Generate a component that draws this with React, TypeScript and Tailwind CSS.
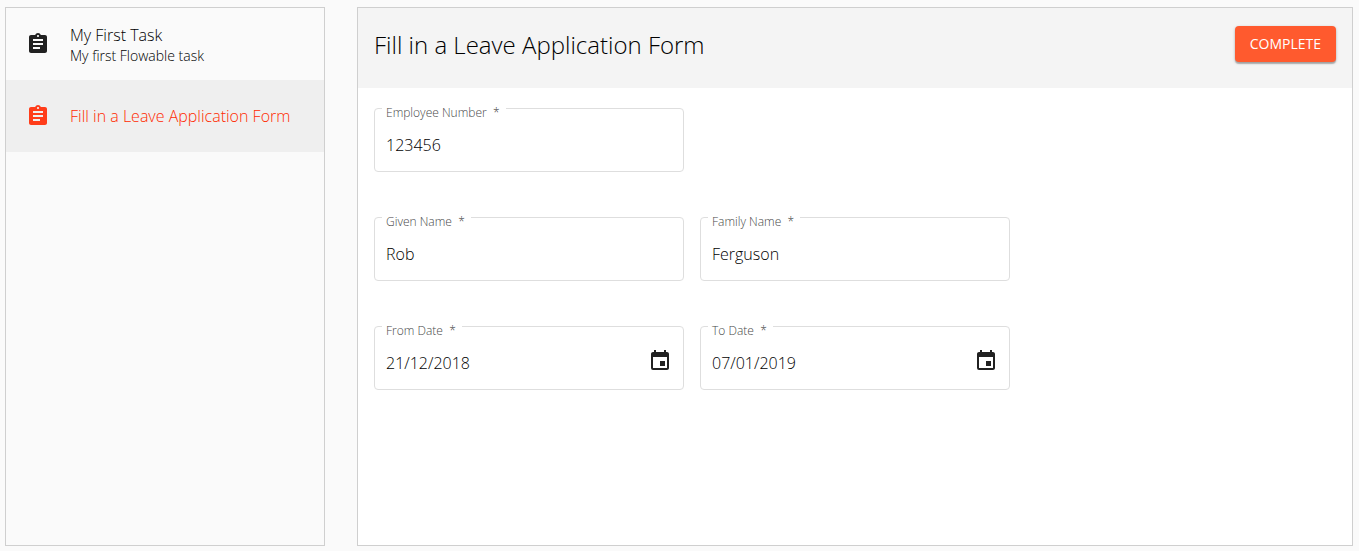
import { useState } from "react";
import { MdAssignment, MdEvent } from "react-icons/md";

type Task = { id: string; title: string; description?: string };

const tasks: Task[] = [
  { id: "first", title: "My First Task", description: "My first Flowable task" },
  { id: "leave", title: "Fill in a Leave Application Form" },
];

type FieldProps = {
  id: string;
  label: string;
  initial: string;
  date?: boolean;
  className?: string;
};

function Field({ id, label, initial, date = false, className = "" }: FieldProps) {
  const [value, setValue] = useState(initial);
  return (
    <div
      className={`relative flex h-16 items-center rounded border border-[#dedede] px-[11px] ${className}`}
    >
      <label
        htmlFor={id}
        className="absolute -top-1 left-[7px] bg-white pl-1 pr-1.5 text-xs leading-4 whitespace-pre text-[#484848]"
      >
        {label}
        {"  *"}
      </label>
      <input
        id={id}
        type="text"
        required
        value={value}
        onChange={(e) => setValue(e.target.value)}
        className="mt-2.5 h-6 min-w-0 flex-1 bg-transparent text-base leading-6 text-black outline-none"
      />
      {date && (
        <button type="button" aria-label={`Choose ${label}`} className="mt-1.5 shrink-0">
          <MdEvent size={24} className="block" />
        </button>
      )}
    </div>
  );
}

export default function App() {
  const [selected, setSelected] = useState("leave");

  return (
    <div className="flex min-h-screen gap-8 bg-[#fafafa] pt-[7px] pr-1.5 pb-[5px] pl-[5px] font-['Open_Sans',sans-serif] font-light text-[#212121]">
      <nav aria-label="Tasks" className="w-80 shrink-0 border border-[#cfcfcf]">
        <ul>
          {tasks.map((task) => (
            <li key={task.id}>
              <button
                type="button"
                onClick={() => setSelected(task.id)}
                className={`flex h-18 w-full items-center gap-5 px-5 text-left ${
                  task.id === selected ? "bg-[#efefef] text-[#ff3d1a]" : ""
                }`}
              >
                <MdAssignment size={24} className="shrink-0" />
                <span
                  className={`flex min-w-0 flex-col ${
                    task.id === selected ? "text-[#ff2a00]" : "text-black"
                  }`}
                >
                  <span className="text-base leading-6">{task.title}</span>
                  {task.description && (
                    <span className="text-sm leading-4.5">{task.description}</span>
                  )}
                </span>
              </button>
            </li>
          ))}
        </ul>
      </nav>

      <main className="min-w-0 flex-1 border border-[#cfcfcf] bg-white">
        <header className="flex h-20 items-center justify-between bg-[#f4f4f4] px-4 pb-2">
          <h1 className="pt-0.5 text-2xl leading-8 text-black">Fill in a Leave Application Form</h1>
          <button
            type="submit"
            form="leave-form"
            className="h-9 rounded bg-[#ff5a2e] px-[15px] text-sm leading-9 font-normal text-white shadow-[0_1px_3px_rgba(0,0,0,0.25),0_2px_1px_rgba(0,0,0,0.2)]"
          >
            COMPLETE
          </button>
        </header>
        <form
          id="leave-form"
          onSubmit={(e) => e.preventDefault()}
          className="grid grid-cols-3 gap-x-4 gap-y-[45px] px-4 py-5"
        >
          <Field id="employee-number" label="Employee Number" initial="123456" />
          <Field id="given-name" label="Given Name" initial="Rob" className="col-start-1" />
          <Field id="family-name" label="Family Name" initial="Ferguson" />
          <Field id="from-date" label="From Date" initial="21/12/2018" date className="col-start-1" />
          <Field id="to-date" label="To Date" initial="07/01/2019" date />
        </form>
      </main>
    </div>
  );
}
